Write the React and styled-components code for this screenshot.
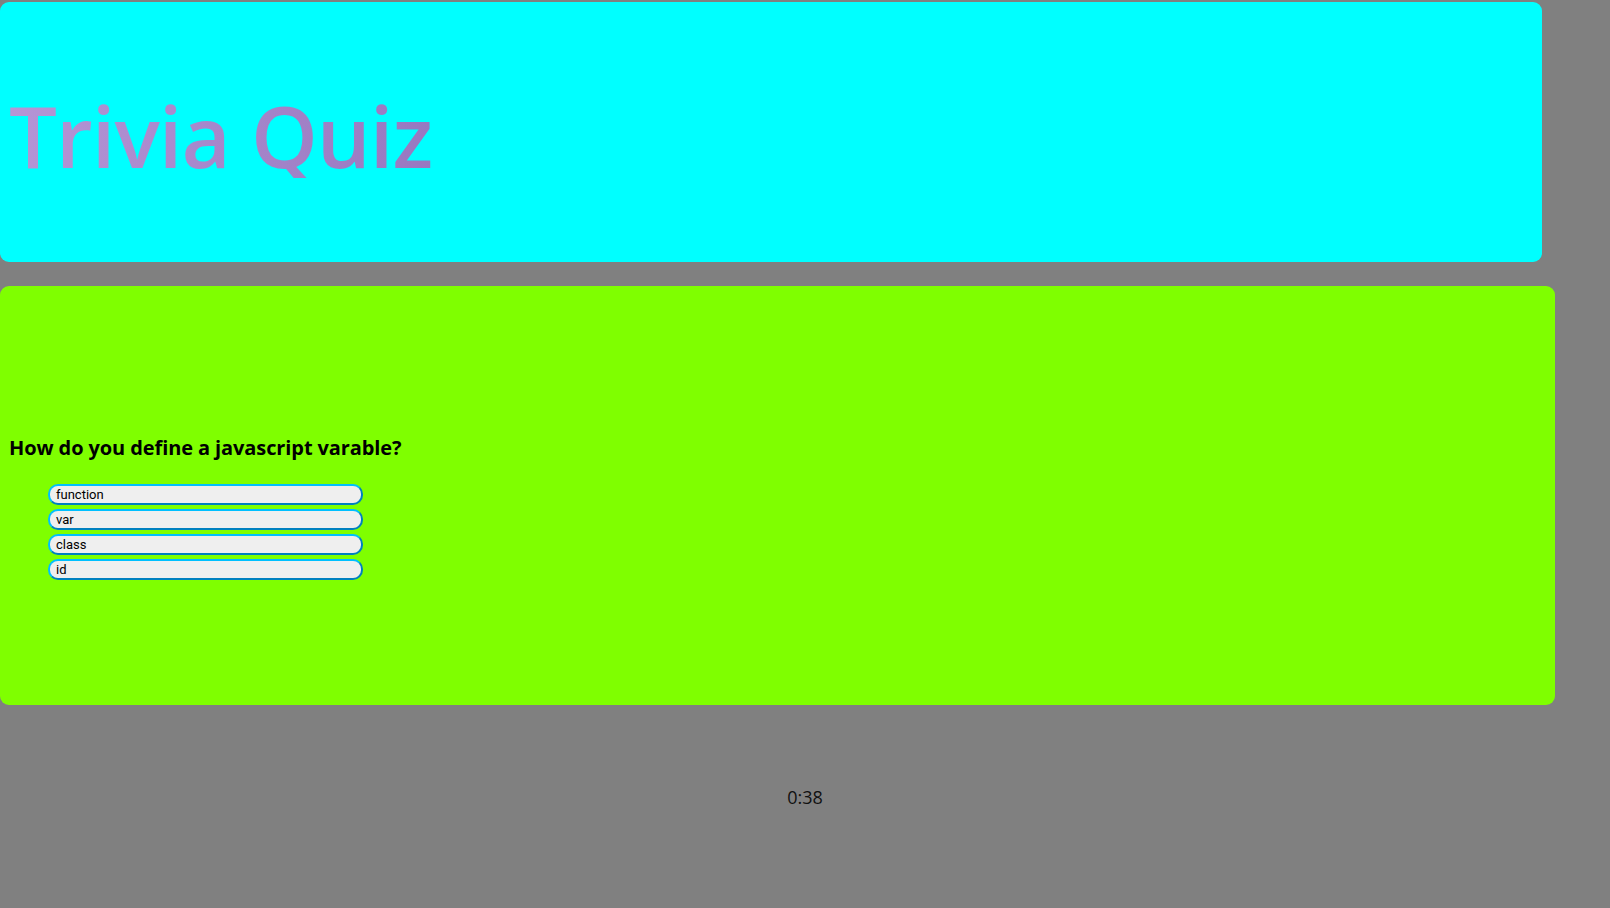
import React from "react";
import styled, { createGlobalStyle } from "styled-components";

const Global = createGlobalStyle`
  html, body { margin: 0; padding: 0; background: #808080; }
  body { font-family: "Open Sans", "Noto Sans", sans-serif; }
`;

const Page = styled.div`
  display: flex;
  flex-direction: column;
  padding-top: 2px;
`;

const Header = styled.header`
  width: 1542px;
  height: 260px;
  background: #00ffff;
  border-radius: 9px;
  display: flex;
  align-items: center;
  padding-left: 9px;
  box-sizing: border-box;
`;

const Title = styled.h1`
  margin: 0;
  font-family: "Open Sans", sans-serif;
  font-weight: 600;
  font-size: 85px;
  line-height: 1;
  letter-spacing: -1px;
  background: linear-gradient(to right, #b595d5, #9878c0);
  -webkit-background-clip: text;
  background-clip: text;
  color: transparent;
  transform: translateY(3px);
`;

const QuizCard = styled.main`
  margin-top: 24px;
  width: 1555px;
  height: 419px;
  background: #7fff00;
  border-radius: 9px;
  display: flex;
  flex-direction: column;
  justify-content: center;
  padding: 22px 0 0 9px;
  box-sizing: border-box;
`;

const Question = styled.h3`
  margin: 0 0 23px 0;
  font-family: "Open Sans", sans-serif;
  font-weight: 700;
  font-size: 20px;
  letter-spacing: -0.1px;
  color: #000;
`;

const Answers = styled.div`
  display: flex;
  flex-direction: column;
  gap: 4px;
  padding-left: 39px;
`;

const Answer = styled.button`
  width: 315px;
  height: 21px;
  box-sizing: border-box;
  border: 2px solid;
  border-color: #00bfff #0080bf #0080bf #00bfff;
  border-radius: 10px;
  background: #efefef;
  text-align: left;
  padding: 0 6px;
  font-family: Roboto, "Liberation Sans", sans-serif;
  font-size: 13px;
  color: #000;
  line-height: 1;
`;

const Timer = styled.div`
  height: 180px;
  display: flex;
  align-items: center;
  justify-content: center;
  width: 1610px;
  font-family: "Open Sans", sans-serif;
  font-size: 18px;
  color: #111;
  padding-top: 4px;
  box-sizing: border-box;
`;

const answers = ["function", "var", "class", "id"];

export default function App() {
  return (
    <>
      <Global />
      <Page>
        <Header>
          <Title>Trivia Quiz</Title>
        </Header>
        <QuizCard>
          <Question>How do you define a javascript varable?</Question>
          <Answers>
            {answers.map((a) => (
              <Answer key={a}>{a}</Answer>
            ))}
          </Answers>
        </QuizCard>
        <Timer>0:38</Timer>
      </Page>
    </>
  );
}
